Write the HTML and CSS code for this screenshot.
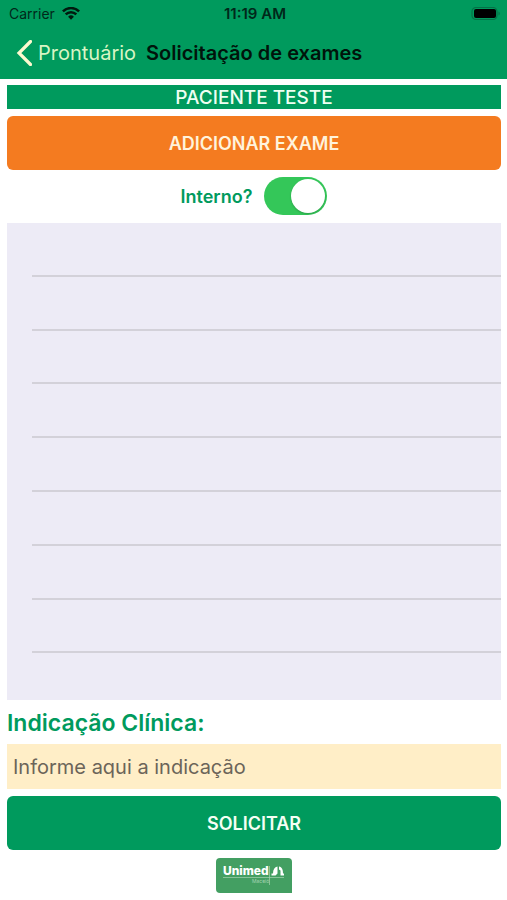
FILE: index.html
```html
<!DOCTYPE html>
<html lang="pt-BR">
<head>
<meta charset="utf-8">
<meta name="viewport" content="width=device-width, initial-scale=1">
<title>Solicitação de exames</title>
<link rel="stylesheet" href="styles.css">
</head>
<body>
<header class="top">
  <div class="status">
    <div class="carrier">
      <span>Carrier</span>
      <svg class="wifi" viewBox="0 0 18 13" aria-hidden="true">
        <path d="M.9 4.400a11.500 11.500 0 0 1 16.200 0M3.700 7.400a7.500 7.500 0 0 1 10.600 0" fill="none" stroke="#001a0e" stroke-width="2.500"/>
        <path d="M6.100 9.800a4.100 4.100 0 0 1 5.800 0L9 12.800z" fill="#001a0e"/>
      </svg>
    </div>
    <time class="clock">11:19 AM</time>
    <svg class="battery" viewBox="0 0 30 14" aria-hidden="true">
      <rect x="1" y=".5" width="25" height="12" rx="4" fill="none" stroke="#047247" stroke-width="1.200"/>
      <rect x="3" y="2" width="22" height="9" rx="2" fill="#000"/>
      <path d="M27.500 4.500c1.700.6 1.700 3.400 0 4z" fill="#047247"/>
    </svg>
  </div>
  <nav class="nav">
    <a class="back" href="#">
      <svg class="chevron" viewBox="0 0 16 26" aria-hidden="true">
        <path d="M14.500 1.500 3 13 14.500 24.500" fill="none" stroke="#fdf9cf" stroke-width="3.200" stroke-linecap="round"/>
      </svg>
      <span>Prontuário</span>
    </a>
    <h1 class="title">Solicitação de exames</h1>
  </nav>
</header>
<main class="content">
  <h2 class="patient">PACIENTE TESTE</h2>
  <button class="button add" type="button">ADICIONAR EXAME</button>
  <div class="internal">
    <label for="interno">Interno?</label>
    <input class="switch" id="interno" type="checkbox" role="switch" checked>
  </div>
  <ul class="exams" aria-label="Exames">
    <li></li><li></li><li></li><li></li><li></li><li></li><li></li><li></li><li></li>
  </ul>
  <label class="caption" for="indicacao">Indicação Clínica:</label>
  <input class="field" id="indicacao" type="text" placeholder="Informe aqui a indicação">
  <button class="button submit" type="button">SOLICITAR</button>
  <svg class="logo" viewBox="0 0 76 35" role="img" aria-label="Unimed">
    <path d="M4 0H72a4 4 0 0 1 4 4V35H4a4 4 0 0 1-4-4V4a4 4 0 0 1 4-4z" fill="#439f62"/>
    <text class="brand" x="7" y="17">Unimed</text>
    <path d="M7 19.500H68M53.500 8V27" fill="none" stroke="#a5d3b2" stroke-width=".7"/>
    <path d="M55.500 17.500V15.500H57C57 11.500 58.500 9 61.500 8.500V15.500L59.500 17.500z" fill="#fff"/>
    <path d="M63 8.500C66 9 67 11.500 67 15.500H68V17.500H64.500V12.500L63 11.500z" fill="#fff"/>
    <text class="branch" x="36" y="25">Maceió</text>
  </svg>
</main>
</body>
</html>
```
FILE: styles.css
```css
* {
  box-sizing: border-box;
}

body {
  margin: 0;
  min-height: 100vh;
  display: flex;
  flex-direction: column;
  background: #fff;
  color: #009a5d;
  font-family: Inter, "Liberation Sans", sans-serif;
}

.top {
  background: #009a5d;
}

.status {
  display: grid;
  grid-template-columns: 1fr auto 1fr;
  align-items: center;
  height: 27px;
  padding: 0 6px 0 9px;
  color: #00281a;
  font-size: 14px;
}

.carrier {
  display: flex;
  align-items: center;
  gap: 7px;
}

.wifi {
  width: 18px;
  height: 13px;
}

.clock {
  font-size: 15px;
  font-weight: 600;
}

.battery {
  justify-self: end;
  width: 30px;
  height: 14px;
}

.nav {
  display: flex;
  align-items: center;
  gap: 10px;
  height: 52px;
  padding: 0 16px;
}

.back {
  display: flex;
  align-items: center;
  gap: 6px;
  color: #d8f5c4;
  font-size: 20px;
  text-decoration: none;
}

.chevron {
  width: 16px;
  height: 26px;
}

.title {
  margin: 0;
  color: #00140b;
  font-size: 20px;
  font-weight: 600;
}

.content {
  flex: 1;
  display: flex;
  flex-direction: column;
  padding: 6px 6px 7px 7px;
}

.patient {
  margin: 0 0 7px;
  padding-top: 1px;
  background: #009a5d;
  color: #effff2;
  font-size: 19px;
  font-weight: 500;
  line-height: 23px;
  text-align: center;
}

.button {
  height: 54px;
  border: 0;
  border-radius: 6px;
  color: #f4fff4;
  font: inherit;
  font-size: 18px;
  font-weight: 600;
}

.add {
  background: #f47b20;
  color: #fff3dc;
}

.submit {
  background: #009a5d;
}

.internal {
  display: flex;
  align-items: center;
  justify-content: center;
  gap: 12px;
  margin: 7px 0 8px;
  font-size: 18px;
  font-weight: 600;
}

.switch {
  appearance: none;
  display: flex;
  align-items: center;
  width: 63px;
  height: 38px;
  margin: 0;
  padding: 2px;
  border-radius: 19px;
  background: #c8c8cc;
}

.switch::before {
  content: "";
  width: 34px;
  height: 34px;
  border-radius: 50%;
  background: #fff;
  box-shadow: 0 1px 2px rgba(0, 0, 0, 0.2);
}

.switch:checked {
  justify-content: flex-end;
  background: #34c759;
}

.exams {
  flex: 1;
  display: flex;
  flex-direction: column;
  margin: 0;
  padding: 0 0 0 25px;
  background: #edebf6;
  list-style: none;
}

.exams li {
  flex: 10;
  border-bottom: 2px solid #d3d1d9;
}

.exams li:last-child {
  flex: 9;
  border-bottom: 0;
}

.caption {
  padding-top: 2px;
  font-size: 23px;
  font-weight: 600;
  line-height: 42px;
}

.field {
  width: 100%;
  height: 45px;
  margin: 0 0 7px;
  padding: 0 6px;
  border: 0;
  background: #ffeec7;
  color: #333;
  font: inherit;
  font-size: 20px;
}

.field::placeholder {
  color: #6b6459;
  opacity: 1;
}

.logo {
  align-self: center;
  width: 76px;
  height: 35px;
  margin-top: 8px;
}

.brand {
  fill: #fff;
  font-size: 12px;
  font-weight: 800;
}

.branch {
  fill: #a5d3b2;
  font-size: 5px;
}
```
